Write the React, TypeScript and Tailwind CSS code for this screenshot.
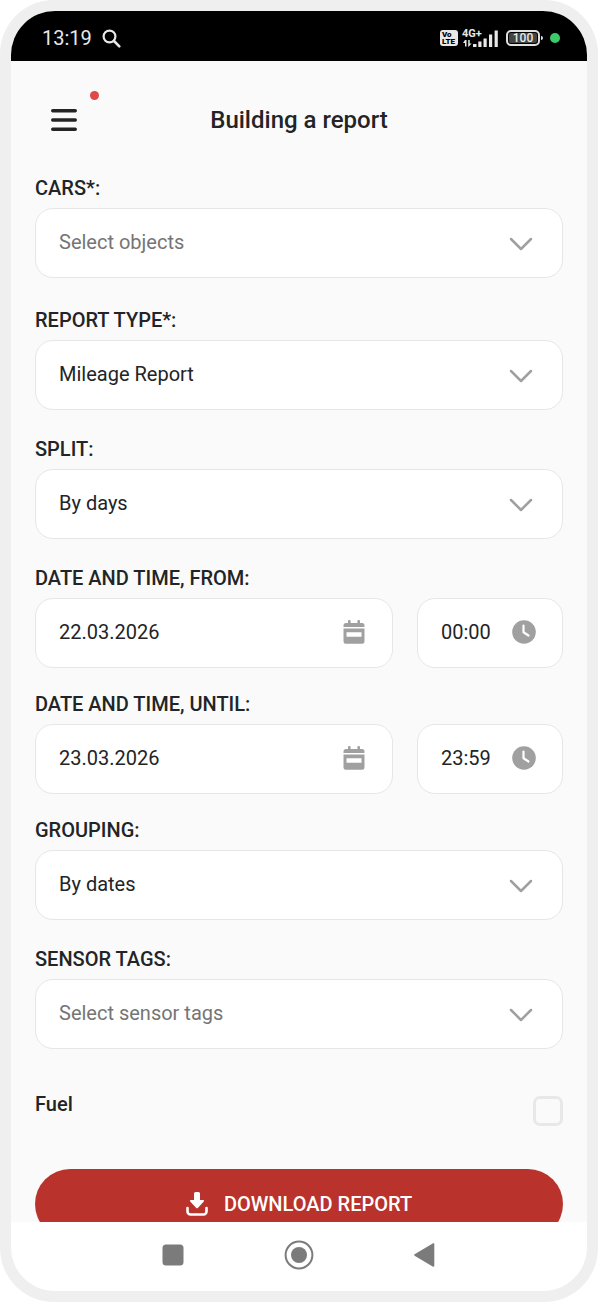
import React, { useState } from "react";

interface SelectFieldProps {
  id: string;
  label: string;
  options: string[];
  placeholder?: boolean;
  className?: string;
}

const labelClass = "block text-xl leading-6 font-medium text-[#222426]";
const boxClass =
  "flex h-[70px] items-center rounded-[18px] border border-[#e6e6e6] bg-white pl-[23px]";

const SelectField: React.FC<SelectFieldProps> = ({
  id,
  label,
  options,
  placeholder,
  className,
}) => (
  <div className={className}>
    <label htmlFor={id} className={labelClass}>
      {label}
    </label>
    <div className="relative mt-2">
      <select
        id={id}
        className={`${boxClass} w-full appearance-none pr-16 pb-0.5 text-xl outline-none ${
          placeholder ? "text-[#757575]" : "text-[#222426]"
        }`}
      >
        {options.map((option) => (
          <option key={option}>{option}</option>
        ))}
      </select>
      <svg
        className="pointer-events-none absolute right-[30px] top-[29px] h-[14px] w-6"
        viewBox="0 0 24 14"
        fill="none"
        stroke="#a0a0a0"
        strokeWidth="2.5"
        strokeLinecap="round"
        strokeLinejoin="round"
      >
        <path d="M2 2 12 12 22 2" />
      </svg>
    </div>
  </div>
);

const CalendarIcon = () => (
  <svg className="h-6 w-[22px] shrink-0" viewBox="0 0 22 24" fill="#a0a0a0">
    <path d="M5 1.2a1.3 1.3 0 0 1 2.6 0V3h6.8V1.2a1.3 1.3 0 0 1 2.6 0V3h2a2.5 2.5 0 0 1 2.5 2.5v1.6h-21V5.5A2.5 2.5 0 0 1 3 3h2z" />
    <path
      fillRule="evenodd"
      d="M.5 8.6h21v13a2.2 2.2 0 0 1-2.2 2.2H2.7A2.2 2.2 0 0 1 .5 21.600zM3.500 12.200v4.600h15v-4.600z"
    />
  </svg>
);

const ClockIcon = () => (
  <svg className="h-6 w-6 shrink-0" viewBox="0 0 24 24">
    <circle cx="12" cy="12" r="11.8" fill="#a0a0a0" />
    <path
      d="M11.500 5.500v6.800l5 3.200"
      fill="none"
      stroke="#fff"
      strokeWidth="2.2"
      strokeLinecap="round"
      strokeLinejoin="round"
    />
  </svg>
);

interface DateTimeFieldProps {
  id: string;
  label: string;
  date: string;
  time: string;
  className?: string;
}

const DateTimeField: React.FC<DateTimeFieldProps> = ({
  id,
  label,
  date,
  time,
  className,
}) => (
  <div className={className}>
    <label htmlFor={id} className={labelClass}>
      {label}
    </label>
    <div className="mt-2 flex gap-6">
      <div className={`${boxClass} min-w-0 flex-1 pr-[27px] pb-0.5`}>
        <input
          id={id}
          type="text"
          defaultValue={date}
          className="min-w-0 flex-1 text-xl text-[#222426] outline-none"
        />
        <CalendarIcon />
      </div>
      <div className={`${boxClass} w-[146px] pr-[26px] pb-0.5`}>
        <input
          type="text"
          aria-label={`${label} time`}
          defaultValue={time}
          className="min-w-0 flex-1 text-xl text-[#222426] outline-none"
        />
        <ClockIcon />
      </div>
    </div>
  </div>
);

const StatusBar = () => (
  <div className="flex h-[50px] shrink-0 items-center justify-between bg-black pl-[31px] pr-[27px] pt-1 text-[#e8e8e8]">
    <div className="flex items-center gap-2.5">
      <span className="text-xl leading-6">13:19</span>
      <svg
        className="h-[19px] w-[19px]"
        viewBox="0 0 19 19"
        fill="none"
        stroke="currentColor"
        strokeLinecap="round"
      >
        <circle cx="7.500" cy="7.500" r="5.900" strokeWidth="2.200" />
        <path d="m12 12 5.300 5.300" strokeWidth="2.600" />
      </svg>
    </div>
    <div className="flex items-center">
      <div className="flex h-4 w-[18px] flex-col items-start justify-center rounded-[3px] bg-[#e8e8e8] pl-0.5 text-[8px] font-black leading-[7px] text-black">
        <span>Vo</span>
        <span>LTE</span>
      </div>
      <svg className="ml-1 h-6 w-[38px]" viewBox="0 -3 38 24" fill="currentColor">
        <text x="0" y="8" fontSize="11" fontWeight="700">
          4G+
        </text>
        <path d="M3 11h1.500v6.500H3v-3.500H1zM6.200 11h1.500v3.500h2L6.200 18z" />
        <path d="M11 15h3.500v3H11zM16.300 12.500h3.200V18h-3.200zM21.500 9.500h3.200V18h-3.200zM27 5.500h3.200V18H27zM32.600 1.500h3.200V18h-3.200z" />
      </svg>
      <div className="ml-1.5 flex items-center">
        <div className="flex h-4 w-[34px] items-center justify-center rounded-[5px] border-2 border-[#e0e0e0] p-px">
          <span className="w-full rounded-xs bg-[#444] text-center text-xs leading-[10px] font-medium">
            100
          </span>
        </div>
        <span className="ml-px h-1 w-0.5 rounded-r bg-[#e0e0e0]" />
      </div>
      <span className="ml-[7px] h-2.5 w-2.5 rounded-full bg-[#3ccb69]" />
    </div>
  </div>
);

const NavBar = () => (
  <nav className="flex h-[69px] shrink-0 items-center justify-center gap-[100px] bg-white pb-1">
    <button type="button" aria-label="Recent apps">
      <svg className="h-[22px] w-[22px]" viewBox="0 0 22 22">
        <rect x=".5" y=".5" width="21" height="21" rx="3.500" fill="#7b7b7b" />
      </svg>
    </button>
    <button type="button" aria-label="Home">
      <svg className="h-[30px] w-[30px]" viewBox="0 0 30 30">
        <circle cx="15" cy="15" r="13.400" fill="none" stroke="#7b7b7b" strokeWidth="2" />
        <circle cx="15" cy="15" r="8" fill="#7b7b7b" />
      </svg>
    </button>
    <button type="button" aria-label="Back">
      <svg className="h-6 w-[22px]" viewBox="0 0 22 24">
        <path
          d="M1 12 19.500 1v22z"
          fill="#7b7b7b"
          stroke="#7b7b7b"
          strokeWidth="1.600"
          strokeLinejoin="round"
        />
      </svg>
    </button>
  </nav>
);

export default function App() {
  const [fuel, setFuel] = useState(false);

  return (
    <div className="h-screen bg-white font-[Roboto,sans-serif]">
      <div className="flex h-full flex-col rounded-[54px] bg-[#efefef] p-[11px]">
        <div className="flex min-h-0 flex-1 flex-col overflow-hidden rounded-[44px] bg-[#fafafa]">
          <StatusBar />
          <main className="min-h-0 flex-1 overflow-y-auto px-6 pb-8 [scrollbar-width:none]">
            <header className="grid h-[115px] grid-cols-[1fr_auto_1fr] items-center pt-0.5">
              <button type="button" aria-label="Menu" className="relative ml-4 w-[26px]">
                <svg
                  className="h-[22px] w-[26px]"
                  viewBox="0 0 26 22"
                  stroke="#222426"
                  strokeWidth="3.400"
                  strokeLinecap="round"
                >
                  <path d="M1.700 1.800h22.600M1.700 11h22.600M1.700 20.200h22.600" />
                </svg>
                <span className="absolute -right-[22px] -top-[18px] h-[9px] w-[9px] rounded-full bg-[#e04848]" />
              </button>
              <h1 className="text-2xl font-medium text-[#222426]">Building a report</h1>
            </header>

            <SelectField
              id="cars"
              label="CARS*:"
              options={["Select objects"]}
              placeholder
              className="mb-[30px]"
            />
            <SelectField
              id="report-type"
              label="REPORT TYPE*:"
              options={["Mileage Report"]}
              className="mb-[27px]"
            />
            <SelectField
              id="split"
              label="SPLIT:"
              options={["By days"]}
              className="mb-[27px]"
            />
            <DateTimeField
              id="from"
              label="DATE AND TIME, FROM:"
              date="22.03.2026"
              time="00:00"
              className="mb-6"
            />
            <DateTimeField
              id="until"
              label="DATE AND TIME, UNTIL:"
              date="23.03.2026"
              time="23:59"
              className="mb-6"
            />
            <SelectField
              id="grouping"
              label="GROUPING:"
              options={["By dates"]}
              className="mb-[27px]"
            />
            <SelectField
              id="sensor-tags"
              label="SENSOR TAGS:"
              options={["Select sensor tags"]}
              placeholder
            />

            <div className="mt-[43px] flex items-start justify-between">
              <label htmlFor="fuel" className={labelClass}>
                Fuel
              </label>
              <input
                id="fuel"
                type="checkbox"
                checked={fuel}
                onChange={(e) => setFuel(e.target.checked)}
                className="mt-1 h-[30px] w-[30px] appearance-none rounded-[7px] border-[3px] border-[#e8e8e8] checked:bg-[#b9322b]"
              />
            </div>

            <button
              type="button"
              className="mt-[43px] flex h-[70px] w-full items-center justify-center gap-4 rounded-full bg-[#b9322b] text-xl font-medium text-white"
            >
              <svg className="h-6 w-[22px]" viewBox="0 0 22 24" fill="currentColor">
                <path d="M8 1.500Q8 0 9.500 0h3Q14 0 14 1.500V8h3.200q1.600.200.600 1.500l-6 6.500q-.8.700-1.600 0l-6-6.500Q3.200 8.200 4.800 8H8z" />
                <path
                  d="M1.500 16v3.500a3 3 0 0 0 3 3h13a3 3 0 0 0 3-3V16"
                  fill="none"
                  stroke="currentColor"
                  strokeWidth="2.600"
                  strokeLinecap="round"
                />
              </svg>
              DOWNLOAD REPORT
            </button>
          </main>
          <NavBar />
        </div>
      </div>
    </div>
  );
}
